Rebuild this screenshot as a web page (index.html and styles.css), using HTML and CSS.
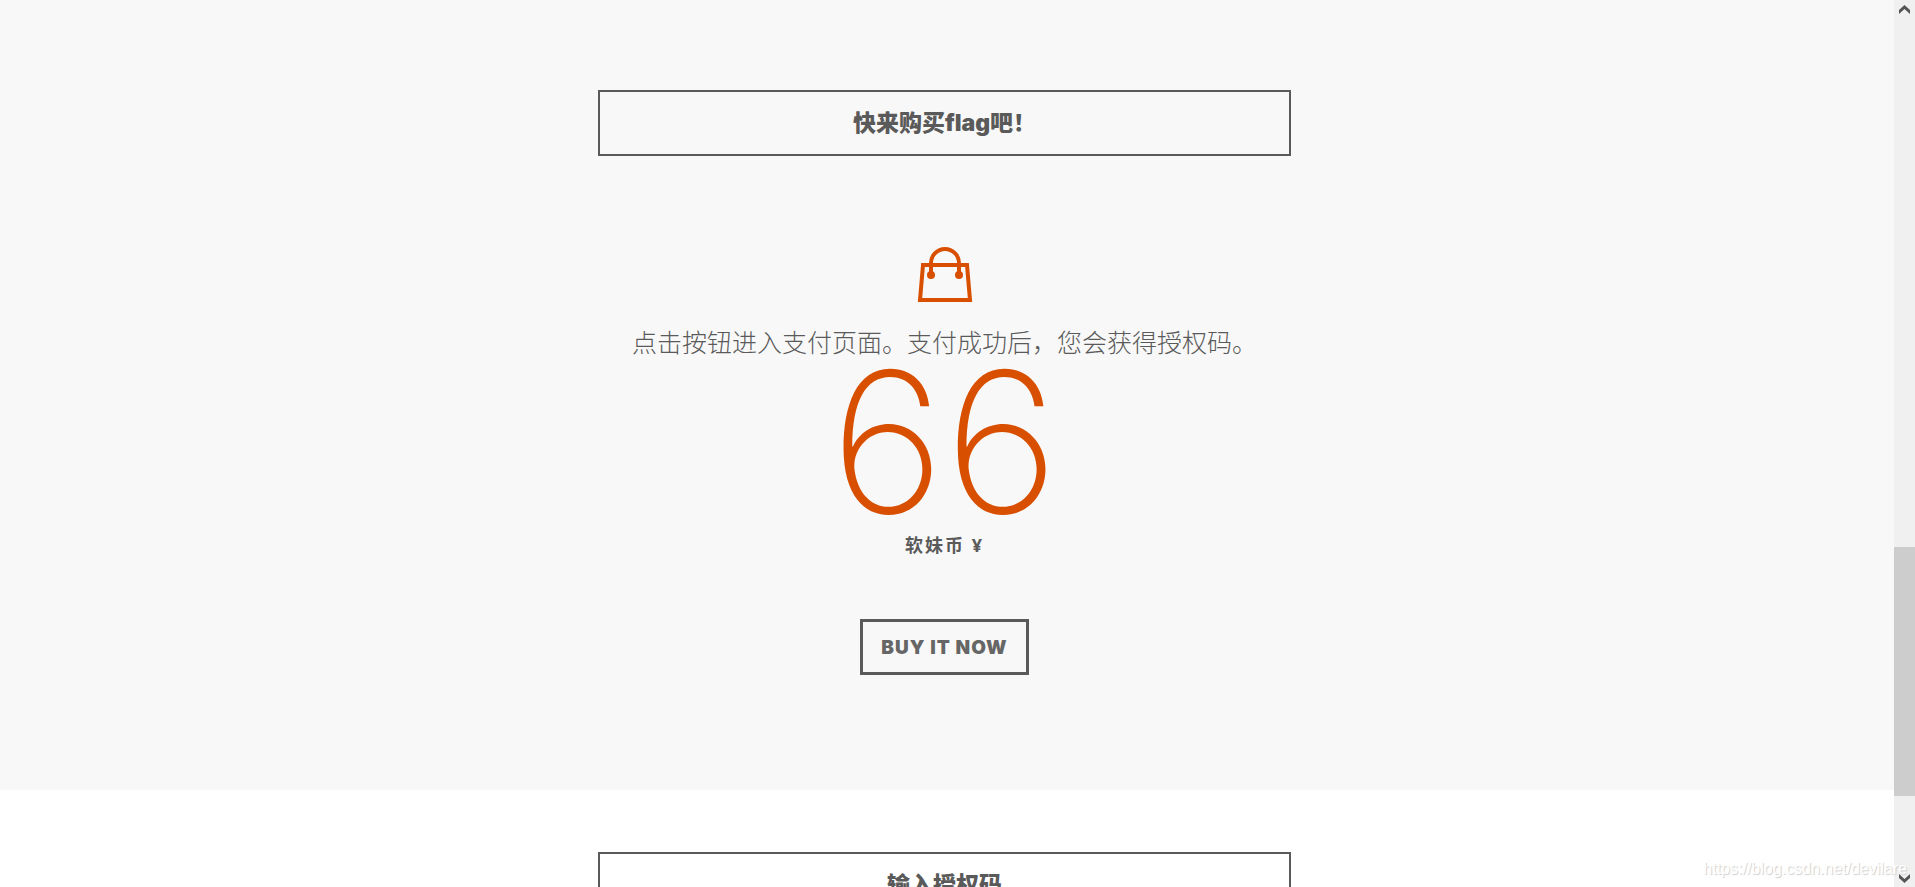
FILE: index.html
```html
<!DOCTYPE html>
<html lang="zh-CN">
<head>
    <meta charset="utf-8">
    <title>购买flag</title>
    <meta name="viewport" content="width=device-width, initial-scale=1">
    <link rel="stylesheet" href="styles.css">
</head>
<body>
<div class="window">
    <main class="page">
        <section class="buy">
            <h2 class="title">快来购买flag吧！</h2>
            <svg class="bag" viewBox="0 0 56 56" aria-hidden="true">
                <path d="M6 18H50L53 53H3Z" fill="none" stroke="currentColor" stroke-width="4"/>
                <path d="M14 28V16a14 14 0 0 1 28 0V28" fill="none" stroke="currentColor" stroke-width="4"/>
                <circle cx="14" cy="28" r="4"/>
                <circle cx="42" cy="28" r="4"/>
            </svg>
            <p class="lead">点击按钮进入支付页面。支付成功后，您会获得授权码。</p>
            <div class="price">66</div>
            <div class="unit">软妹币 ¥</div>
            <button class="buy-button" type="button">BUY IT NOW</button>
        </section>
        <section class="code">
            <h2 class="title">输入授权码</h2>
        </section>
    </main>
    <div class="scrollbar" aria-hidden="true">
        <svg class="arrow" viewBox="0 0 11 9"><path d="M0 5L5.500 0L11 5V9L5.500 4L0 9Z"/></svg>
        <div class="track"><div class="thumb"></div></div>
        <svg class="arrow" viewBox="0 0 11 9"><path d="M0 0L5.500 5L11 0V4L5.500 9L0 4Z"/></svg>
    </div>
    <div class="watermark">https://blog.csdn.net/devilare</div>
</div>
</body>
</html>
```
FILE: styles.css
```css
:root {
    --text: #5a5a5a;
    --accent: #d94f00;
    --grey: #f8f8f8;
}

* {
    box-sizing: border-box;
}

body {
    margin: 0;
    font-family: Inter, "Noto Sans CJK SC", sans-serif;
    color: var(--text);
    background: #fff;
}

.window {
    position: relative;
    display: flex;
    height: 100vh;
    overflow: hidden;
}

.page {
    flex: 1;
    overflow: hidden;
}

section {
    display: flex;
    flex-direction: column;
    align-items: center;
    padding-right: 5px;
}

.buy {
    padding-top: 90px;
    padding-bottom: 115px;
    background: var(--grey);
}

.code {
    padding-top: 62px;
}

.title {
    width: 90%;
    max-width: 693px;
    margin: 0;
    padding: 16px;
    border: 2px solid var(--text);
    font-size: 23px;
    line-height: 30px;
    font-weight: 900;
    text-align: center;
}

.bag {
    width: 56px;
    height: 56px;
    margin-top: 91px;
    color: var(--accent);
    fill: currentColor;
}

.lead {
    margin: 19px 0 0;
    font-family: "Noto Sans CJK SC", sans-serif;
    font-size: 25px;
    line-height: 38px;
    font-weight: 300;
}

.price {
    font-size: 196px;
    line-height: 164px;
    font-weight: 200;
    color: var(--accent);
}

.unit {
    margin-top: 6px;
    font-family: "Open Sans", "Noto Sans CJK SC", sans-serif;
    font-size: 18px;
    line-height: 30px;
    font-weight: 700;
    letter-spacing: 2px;
}

.buy-button {
    height: 56px;
    margin-top: 59px;
    padding: 0 18px;
    border: 3px solid var(--text);
    background: transparent;
    color: #666;
    font-family: inherit;
    font-size: 19px;
    font-weight: 900;
    letter-spacing: 1px;
    cursor: pointer;
}

.scrollbar {
    display: flex;
    flex-direction: column;
    align-items: center;
    width: 21px;
    padding: 5px 0 4px;
    background: #f0f0f0;
}

.arrow {
    width: 11px;
    height: 9px;
    fill: #555;
}

.track {
    display: flex;
    flex: 1;
    flex-direction: column;
    justify-content: flex-end;
    width: 100%;
    padding-bottom: 78px;
}

.thumb {
    height: 249px;
    background: #cdcdcd;
}

.watermark {
    position: absolute;
    right: 8px;
    bottom: 8px;
    font-family: "Liberation Sans", sans-serif;
    font-size: 16px;
    line-height: 20px;
    color: #fff;
    text-shadow: 1px 1px 1px #ccc;
}
```
